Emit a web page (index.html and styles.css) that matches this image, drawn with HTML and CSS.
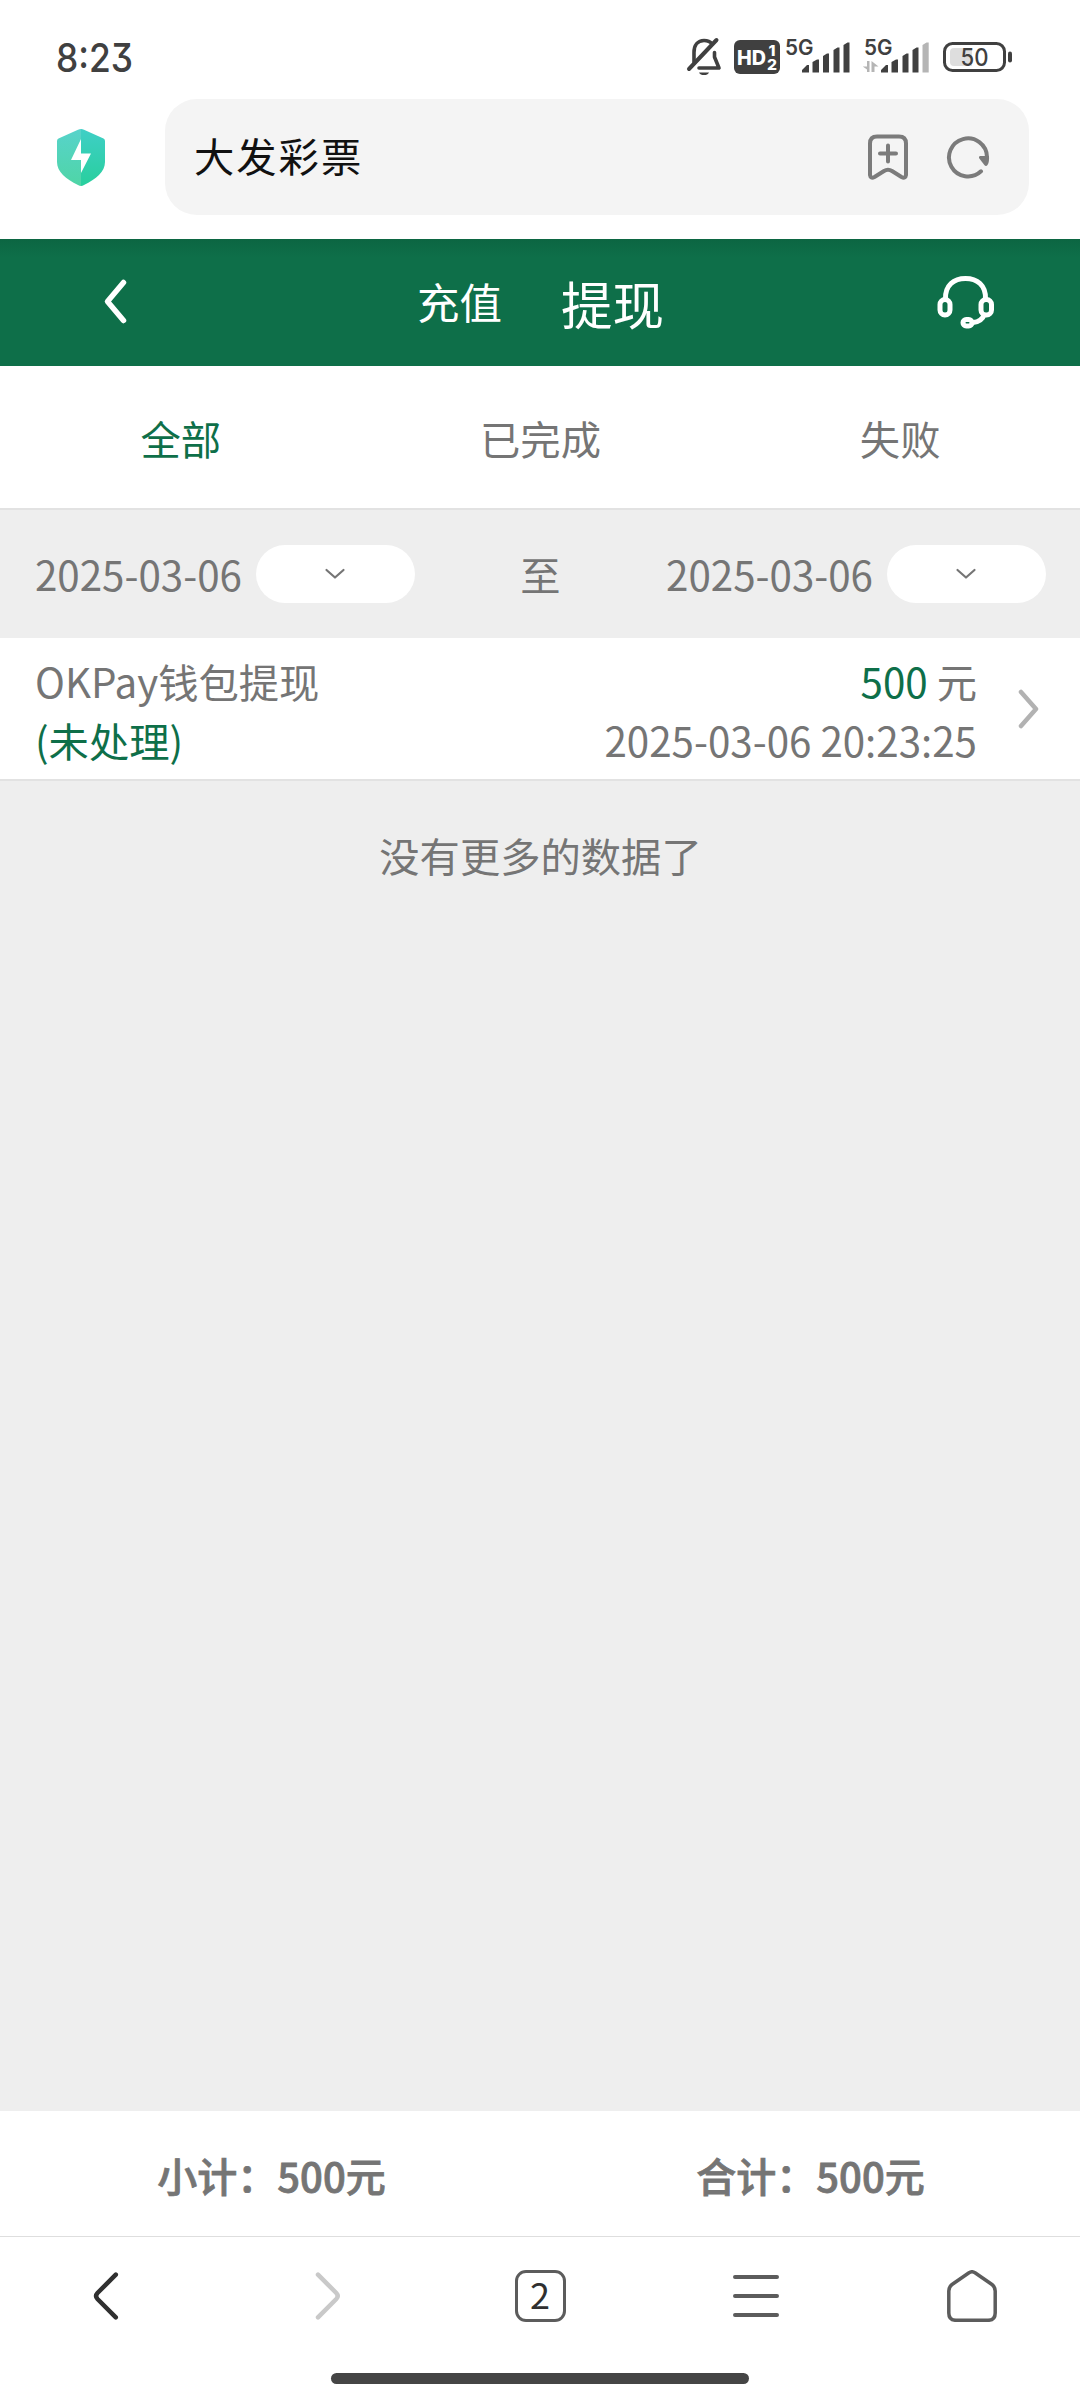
FILE: index.html
```html
<!DOCTYPE html>
<html lang="zh-CN">
<head>
<meta charset="utf-8">
<title>大发彩票</title>
<link rel="stylesheet" href="styles.css">
</head>
<body>
<div class="screen">
  <div class="status">
    <svg class="clock" width="90" height="52" viewBox="0 -8 90 52"><text x="0" y="32.500" textLength="77" lengthAdjust="spacingAndGlyphs">8:23</text></svg>
    <div class="status-icons">
      <svg class="mute" width="36" height="40" viewBox="686 38 36 40" fill="none" stroke="#404040" stroke-width="3.6" stroke-linecap="round" stroke-linejoin="round">
        <path d="M694 63V53.500C694 46 698 41.500 704 41.500C708 41.500 710.500 43 712 45M714.500 53.500V58L719 69H699"/>
        <path d="M689 70L716.500 41" stroke-width="4"/>
        <path d="M699 73.500H709C708 75.500 706.500 76 704 76S700 75.500 699 73.500Z" fill="#404040" stroke="none"/>
      </svg>
      <svg class="hd" width="46" height="34" viewBox="0 0 46 34">
        <rect width="46" height="34" rx="6" fill="#404040"/>
        <text class="badge-text" x="3" y="24.500" font-size="20" textLength="29" lengthAdjust="spacingAndGlyphs">HD</text>
        <text class="badge-text" x="34.500" y="15.500" font-size="14.500" textLength="7" lengthAdjust="spacingAndGlyphs">1</text>
        <text class="badge-text" x="33" y="30" font-size="14.500" textLength="10" lengthAdjust="spacingAndGlyphs">2</text>
      </svg>
      <svg class="signal" width="66" height="44" viewBox="785 35 66 44" fill="#404040">
        <text class="net" x="785" y="54.500" textLength="28.500" lengthAdjust="spacingAndGlyphs">5G</text>
        <path d="M802 72.600V70L807 65H809V72.600ZM812.500 72.600V62L817 59.500H819V72.600ZM823 72.600V56L827 53.500H829V72.600ZM833.500 72.600V50L837.500 47.500H839.500V72.600ZM843.500 72.600V45L847.500 42.500H849.500V72.600Z" />
      </svg>
      <svg class="signal-two" width="68" height="44" viewBox="862 35 68 44" fill="#404040">
        <text class="net" x="864" y="54.500" textLength="28.500" lengthAdjust="spacingAndGlyphs">5G</text>
        <path d="M881 72.600V70L886 65H888V72.600ZM891.500 72.600V62L896 59.500H898V72.600ZM902.500 72.600V56L906.500 53.500H908.500V72.600ZM912.500 72.600V50L916.500 47.500H918.500V72.600Z"/>
        <path d="M922.500 72.600V45L926.500 42.500H928.700V72.600ZM867 61H869.500V72H867V69.500L862.800 66.500H867ZM871.500 61L878.500 66.500H874.500V72H871.500Z" fill="#b5b5b5"/>
      </svg>
      <svg class="battery" width="70" height="32" viewBox="942 41 70 32">
        <rect x="944.500" y="43.500" width="60" height="27" rx="8" fill="#fff" stroke="#404040" stroke-width="3"/>
        <path d="M972 48H954Q950 48 950 52V62Q950 66 954 66H972Z" fill="#dedede"/>
        <rect x="1008" y="51.500" width="4" height="11" rx="2" fill="#404040"/>
        <text class="charge" x="960.500" y="65.500" textLength="28" lengthAdjust="spacingAndGlyphs">50</text>
      </svg>
    </div>
  </div>

  <div class="browser-bar">
    <svg class="shield" width="48" height="57" viewBox="0 0 48 57">
      <defs>
        <linearGradient id="shieldLeft" x1="0" y1="0" x2="0" y2="1"><stop offset="0" stop-color="#57d3cb"/><stop offset="1" stop-color="#4fd5a6"/></linearGradient>
        <linearGradient id="shieldRight" x1="0" y1="0" x2="0" y2="1"><stop offset="0" stop-color="#3fcfc6"/><stop offset="1" stop-color="#28cf9d"/></linearGradient>
      </defs>
      <path d="M24 0Q22.500 0 21 .8L1.500 9.500Q0 10.300 0 12V33C0 43 9 50 21 56Q22.500 57 24 57Z" fill="url(#shieldLeft)"/>
      <path d="M24 0Q25.500 0 27 .8L46.500 9.500Q48 10.300 48 12V33C48 43 39 50 27 56Q25.500 57 24 57Z" fill="url(#shieldRight)"/>
      <path d="M24 10L14 31H24V44L34 24.500H24Z" fill="#fff"/>
    </svg>
    <div class="address">
      <span class="site">大发彩票</span>
      <svg class="bookmark" width="40" height="46" viewBox="868 133.500 40 46" fill="none" stroke="#7b7b7b" stroke-width="4" stroke-linecap="round" stroke-linejoin="round">
        <path d="M877 136H899Q906 136 906 143V174.500Q905.500 178.500 901.500 176.500L892 170.500Q888 168 884 170.500L874.500 176.500Q870.500 178.500 870 174.500V143Q870 136 877 136Z"/>
        <path d="M888 145V161M880 153H896"/>
      </svg>
      <svg class="reload" width="44" height="44" viewBox="946 135 44 44">
        <path d="M981 171.300A19 19 0 1 1 987 157" fill="none" stroke="#7b7b7b" stroke-width="4" stroke-linecap="round"/>
        <path d="M980 156H989C989.200 159 989 163 987.500 165Q986 166.800 984.300 165L979 158Q978.500 156.500 980 156Z" fill="#7b7b7b"/>
      </svg>
    </div>
  </div>

  <header class="app-header">
    <svg class="header-back" width="28" height="48" viewBox="102 277 28 48" fill="none" stroke="#fff" stroke-width="5.500" stroke-linecap="round" stroke-linejoin="round"><path d="M123.500 282.500L107.500 301.500L123.500 320.500"/></svg>
    <nav class="modes"><span class="mode">充值</span><span class="mode mode-active">提现</span></nav>
    <svg class="headset" width="58" height="56" viewBox="937 275 58 56" fill="none" stroke="#fff" stroke-width="5">
      <path d="M945.500 299C945 285 954 278.500 965.500 278.500S986 285 985.500 299"/>
      <rect x="940" y="299.500" width="10" height="15.500" rx="5"/>
      <rect x="981" y="299.500" width="10.500" height="15.500" rx="5"/>
      <path d="M984.500 314C982.500 320 979 322 973 322.500"/>
      <rect x="963" y="319.500" width="9" height="6.500" rx="3.200"/>
    </svg>
  </header>

  <nav class="filters"><span class="filter filter-active">全部</span><span class="filter">已完成</span><span class="filter">失败</span></nav>

  <div class="dates">
    <div class="date"><span class="day">2025-03-06</span><span class="pill"><svg width="22" height="14" viewBox="0 0 22 14"><path d="M2.500 3L11 10.500L19.500 3"/></svg></span></div>
    <span class="to">至</span>
    <div class="date"><span class="day">2025-03-06</span><span class="pill"><svg width="22" height="14" viewBox="0 0 22 14"><path d="M2.500 3L11 10.500L19.500 3"/></svg></span></div>
  </div>

  <div class="record">
    <div class="record-main"><span>OKPay钱包提现</span><span class="green">(未处理)</span></div>
    <div class="record-side"><span><span class="green">500</span> 元</span><span>2025-03-06 20:23:25</span></div>
    <svg class="more" width="22" height="42" viewBox="0 0 22 42" fill="none" stroke="#b2b2b2" stroke-width="4.500" stroke-linecap="round" stroke-linejoin="round"><path d="M3 4L18 21L3 38"/></svg>
  </div>

  <main class="list"><p class="end">没有更多的数据了</p></main>

  <footer class="totals"><span>小计：500元</span><span>合计：500元</span></footer>

  <div class="toolbar">
    <div class="tool"><svg class="tool-back" width="28" height="52" viewBox="92 2270 28 52" fill="none" stroke="#303030" stroke-width="4.500" stroke-linecap="round"><path d="M115.800 2274.700L97.500 2293Q94.700 2296 97.500 2299L115.800 2317.300"/></svg></div>
    <div class="tool"><svg class="tool-forward" width="28" height="52" viewBox="314 2270 28 52" fill="none" stroke="#c9c9c9" stroke-width="4.500" stroke-linecap="round"><path d="M318 2274.700L336.300 2293Q339.100 2296 336.300 2299L318 2317.300"/></svg></div>
    <div class="tool"><span class="tab-count">2</span></div>
    <div class="tool"><svg width="48" height="44" viewBox="0 0 48 44" fill="none" stroke="#5c5c5c" stroke-width="4" stroke-linecap="round"><path d="M3 3H45M3 22H45M3 41H45"/></svg></div>
    <div class="tool"><svg width="52" height="52" viewBox="946 2269 52 52" fill="none" stroke="#5c5c5c" stroke-width="3.500" stroke-linejoin="round"><path d="M969 2271.700Q972 2269.800 975 2271.700L992 2283.500Q995.200 2286 995.200 2290V2312Q995.200 2319.300 988 2319.300H956Q948.800 2319.300 948.800 2312V2290Q948.800 2286 952 2283.500Z"/></svg></div>
  </div>
  <div class="gesture"><span class="gesture-bar"></span></div>
</div>
</body>
</html>
```
FILE: styles.css
```css
* { box-sizing: border-box; }
body { margin: 0; }
svg { display: block; flex: none; }

.screen {
  display: flex;
  flex-direction: column;
  width: 1080px;
  height: 2400px;
  overflow: hidden;
  background: #fff;
  color: #757575;
  font: 40.3px/58px "Noto Sans CJK SC", sans-serif;
}
.green { color: #0e6f49; }

.status {
  display: flex;
  justify-content: space-between;
  align-items: center;
  height: 99px;
  padding: 15px 68px 0 56px;
}
.clock { overflow: visible; font: 500 39.5px Inter, sans-serif; font-feature-settings: "cv09"; fill: #404040; }
.status-icons { display: flex; align-items: center; }
.hd { margin-left: 12px; }
.badge-text { font-family: Inter, sans-serif; font-weight: 800; fill: #fff; }
.signal { margin-left: 5px; }
.signal-two { margin-left: 11px; }
.battery { margin-left: 12px; }
.net { font: 600 21.5px Inter, sans-serif; }
.charge { font: 500 24px Inter, sans-serif; fill: #404040; }

.browser-bar {
  display: flex;
  height: 140px;
  padding: 0 51px 24px 57px;
}
.shield { margin: 30px 60px 0 0; }
.address {
  display: flex;
  flex: 1;
  align-items: center;
  padding: 0 39px 0 29px;
  border-radius: 32px;
  background: #f4f4f4;
}
.site { flex: 1; padding-bottom: 5px; color: #111; letter-spacing: 2px; }
.reload { margin-left: 38px; }

.app-header {
  display: grid;
  grid-template-columns: 1fr auto 1fr;
  align-items: center;
  height: 127px;
  padding: 0 86px 0 102px;
  background: linear-gradient(#0c6642, #0e6f49 18px);
  color: #fff;
}
.header-back { margin-bottom: 3px; }
.headset { justify-self: end; margin-right: -1px; }
.modes { display: flex; align-items: center; gap: 59px; margin-left: -15px; padding-top: 1px; }
.mode { padding-bottom: 4px; font-size: 42.5px; }
.mode-active { padding-bottom: 0; font-size: 51.5px; }

.filters {
  display: grid;
  grid-template-columns: repeat(3, 1fr);
  align-items: center;
  height: 144px;
  padding: 2px 0 0 1px;
  border-bottom: 2px solid #e2e2e2;
  text-align: center;
}
.filter-active { color: #0e6f49; }

.dates {
  display: flex;
  align-items: center;
  justify-content: space-between;
  height: 128px;
  padding: 0 34px 0 35px;
  background: #eee;
}
.date { display: flex; align-items: center; gap: 14px; }
.pill {
  display: flex;
  align-items: center;
  justify-content: center;
  width: 159px;
  height: 58px;
  border-radius: 29px;
  background: #fff;
}
.pill path { fill: none; stroke: #757575; stroke-width: 2.200; stroke-linecap: round; stroke-linejoin: round; }

.record {
  display: flex;
  align-items: center;
  height: 143px;
  padding: 3px 40px 0 35px;
  border-bottom: 2px solid #e2e2e2;
  line-height: 59px;
}
.record-main { display: flex; flex: 1; flex-direction: column; }
.record-side { display: flex; flex-direction: column; align-items: flex-end; }
.more { margin: 0 0 3px 41px; }

.list { flex: 1; background: #eee; }
.end { margin: 45px 0 0 1px; text-align: center; }

.totals {
  display: grid;
  grid-template-columns: 1fr 1fr;
  align-items: center;
  height: 125px;
  padding: 3px 0 0 2px;
  font-size: 40px;
  font-weight: 500;
  -webkit-text-stroke: 0.8px currentColor;
  text-align: center;
}

.toolbar {
  display: flex;
  height: 118px;
  border-top: 1px solid #dedede;
}
.tool { display: flex; flex: 1; align-items: center; justify-content: center; }
.tool-back { margin-right: 4px; }
.tool-forward { margin-left: 8px; }
.tab-count {
  width: 51px;
  height: 52px;
  border: 3.500px solid #5c5c5c;
  border-radius: 11px;
  color: #303030;
  font: 36px/41px "Noto Sans CJK SC", sans-serif;
  text-align: center;
}
.gesture { display: flex; justify-content: center; height: 46px; padding-top: 19px; }
.gesture-bar { width: 418px; height: 11px; border-radius: 6px; background: #454545; }
```
